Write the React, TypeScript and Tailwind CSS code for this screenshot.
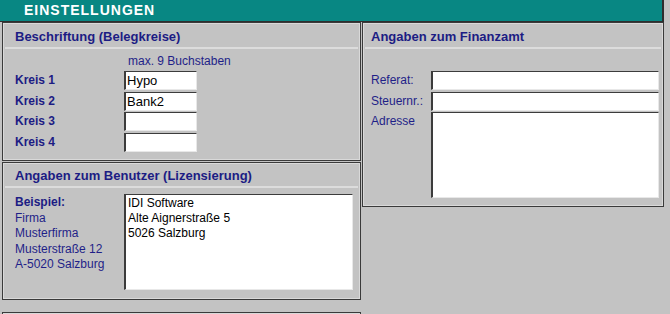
const panel =
  "border border-[#3a3a3a] bg-[#c3c3c3] shadow-[inset_1px_1px_0_#d9d9d9,inset_-1px_-1px_0_#d9d9d9]";
const field =
  "bg-white border-t border-l-2 border-r border-b border-t-[#3c3c3c] border-l-[#3c3c3c] border-r-[#e8e8e8] border-b-[#e8e8e8] text-black text-[12px] pl-[1px]";
const sep = "mx-[2px] h-[2px] bg-[#dcdcdc]";
const title = "text-[13px] font-bold leading-[16px] text-[#1c1c84]";

function KreisRow({ label, value, mt }: { label: string; value: string; mt: string }) {
  return (
    <div className={`flex items-center h-[19px] ${mt}`}>
      <div className="w-[121px] pl-[12px] text-[12px] font-bold text-[#1c1c84] leading-[19px]">{label}</div>
      <div className={`${field} w-[73px] h-[19px] leading-[17px] !text-[13px]`}>{value}</div>
    </div>
  );
}

export default function App() {
  return (
    <div className="w-[670px] h-[314px] overflow-hidden bg-[#c3c3c3] font-['Liberation_Sans',Arial,sans-serif]">
      <div className="w-[664px] h-[22px] bg-[#088783] border-b border-r-2 border-[#2e2e2e] pl-[24px] text-white font-bold text-[14px] tracking-[1px] leading-[21px]">
        EINSTELLUNGEN
      </div>
      <div className="flex items-start pl-[2px]">
        <div className="flex flex-col w-[359px]">
          <div className={`${panel} h-[139px]`}>
            <div className={`${title} pl-[12px] pt-[6px] pb-[2px]`}>Beschriftung (Belegkreise)</div>
            <div className={sep} />
            <div className="mt-[5px] pl-[125px] text-[12px] leading-[14px] text-[#1f1f88]">max. 9 Buchstaben</div>
            <KreisRow label="Kreis 1" value="Hypo" mt="mt-[3px]" />
            <KreisRow label="Kreis 2" value="Bank2" mt="mt-[2px]" />
            <KreisRow label="Kreis 3" value="" mt="mt-[1px]" />
            <KreisRow label="Kreis 4" value="" mt="mt-[2px]" />
          </div>
          <div className={`${panel} h-[138px] mt-[1px]`}>
            <div className={`${title} pl-[12px] pt-[5px] pb-[2px]`}>Angaben zum Benutzer (Lizensierung)</div>
            <div className={sep} />
            <div className="flex mt-[6px]">
              <div className="w-[121px] pl-[12px] pt-[1px] text-[12px] leading-[15.5px] text-[#1f1f88]">
                <div className="font-bold text-[#1c1c84]">Beispiel:</div>
                <div>Firma</div>
                <div>Musterfirma</div>
                <div>Musterstraße 12</div>
                <div>A-5020 Salzburg</div>
              </div>
              <div className={`${field} w-[229px] h-[96px] pl-[2px] pt-[1px] leading-[15px]`}>
                <div>IDI Software</div>
                <div>Alte Aignerstraße 5</div>
                <div>5026 Salzburg</div>
              </div>
            </div>
          </div>
          <div className={`${panel} h-[100px] mt-[12px]`} />
        </div>
        <div className={`${panel} ml-[1px] w-[302px] h-[185px]`}>
          <div className={`${title} pl-[8px] pt-[6px] pb-[2px]`}>Angaben zum Finanzamt</div>
          <div className={sep} />
          <div className="flex items-center h-[19px] mt-[22px]">
            <div className="w-[68px] pl-[8px] text-[12px] leading-[19px] text-[#1f1f88]">Referat:</div>
            <div className={`${field} w-[228px] h-[19px]`} />
          </div>
          <div className="flex items-center h-[19px] mt-[2px]">
            <div className="w-[68px] pl-[8px] text-[12px] leading-[19px] text-[#1f1f88]">Steuernr.:</div>
            <div className={`${field} w-[228px] h-[19px]`} />
          </div>
          <div className="flex items-start mt-[1px]">
            <div className="w-[68px] pl-[8px] text-[12px] leading-[19px] text-[#1f1f88]">Adresse</div>
            <div className={`${field} w-[228px] h-[86px]`} />
          </div>
        </div>
      </div>
    </div>
  );
}
